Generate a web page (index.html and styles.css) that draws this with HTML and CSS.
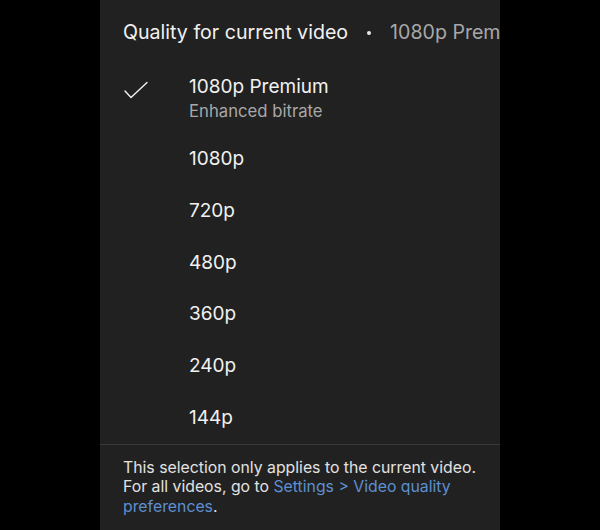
FILE: index.html
```html
<!DOCTYPE html>
<html lang="en">
<head>
  <meta charset="UTF-8">
  <title>Quality for current video</title>
  <link rel="stylesheet" href="styles.css">
</head>
<body>
  <div class="sheet">
    <div class="sheet-head">
      <span class="head-title">Quality for current video</span>
      <span class="head-dot"></span>
      <span class="head-value">1080p Premium</span>
    </div>

    <ul class="quality-list">
      <li class="quality-item selected">
        <span class="check">
          <svg width="26" height="20" viewBox="0 0 26 20"><path d="M2 10 L8 16.5 L24 1.5" fill="none" stroke="#f1f1f1" stroke-width="1.4" stroke-linecap="round" stroke-linejoin="round"/></svg>
        </span>
        <span class="quality-text">
          <span class="quality-name">1080p Premium</span>
          <span class="quality-sub">Enhanced bitrate</span>
        </span>
      </li>
      <li class="quality-item"><span class="check"></span><span class="quality-name">1080p</span></li>
      <li class="quality-item"><span class="check"></span><span class="quality-name">720p</span></li>
      <li class="quality-item"><span class="check"></span><span class="quality-name">480p</span></li>
      <li class="quality-item"><span class="check"></span><span class="quality-name">360p</span></li>
      <li class="quality-item"><span class="check"></span><span class="quality-name">240p</span></li>
      <li class="quality-item"><span class="check"></span><span class="quality-name">144p</span></li>
    </ul>

    <p class="sheet-note">
      This selection only applies to the current video.<br>
      For all videos, go to <a href="#">Settings &gt; Video quality preferences</a>.
    </p>
  </div>
</body>
</html>
```

FILE: styles.css
```css
html, body { margin: 0; padding: 0; background: #000; }
body { font-family: Inter, "Noto Sans", Arial, sans-serif; -webkit-font-smoothing: antialiased; }

.sheet {
  width: 400px;
  height: 530px;
  margin: 0 auto;
  background: #212121;
  overflow: hidden;
  color: #f1f1f1;
}

.sheet-head {
  display: flex;
  align-items: center;
  white-space: nowrap;
  overflow: hidden;
  padding: 19px 0 0 23px;
  height: 26px;
  font-size: 19.6px;
}
.head-title { color: #f1f1f1; }
.head-dot {
  flex: none;
  width: 4px; height: 4px;
  border-radius: 50%;
  background: #e8e8e8;
  margin: 2px 19px 0 19px;
}
.head-value { color: #a8a8a8; }

.quality-list { list-style: none; margin: 30px 0 0; padding: 0; }
.quality-item {
  display: flex;
  align-items: center;
  height: 51.8px;
  font-size: 19px;
}
.quality-item.selected { height: 58.2px; align-items: flex-start; }
.check { flex: none; width: 89px; display: flex; padding-left: 23px; box-sizing: border-box; }
.selected .check { padding-top: 6px; }
.quality-text { display: flex; flex-direction: column; }
.quality-name { color: #f1f1f1; line-height: 24px; }
.quality-sub { color: #a8a8a8; font-size: 16.7px; line-height: 24px; }

.sheet-note {
  margin: 0;
  border-top: 1px solid #3a3a3a;
  padding: 13px 23px 0;
  font-size: 15.8px;
  line-height: 19.5px;
  color: #e2e2e2;
}
.sheet-note a { color: #5e8fd0; text-decoration: none; }
```
